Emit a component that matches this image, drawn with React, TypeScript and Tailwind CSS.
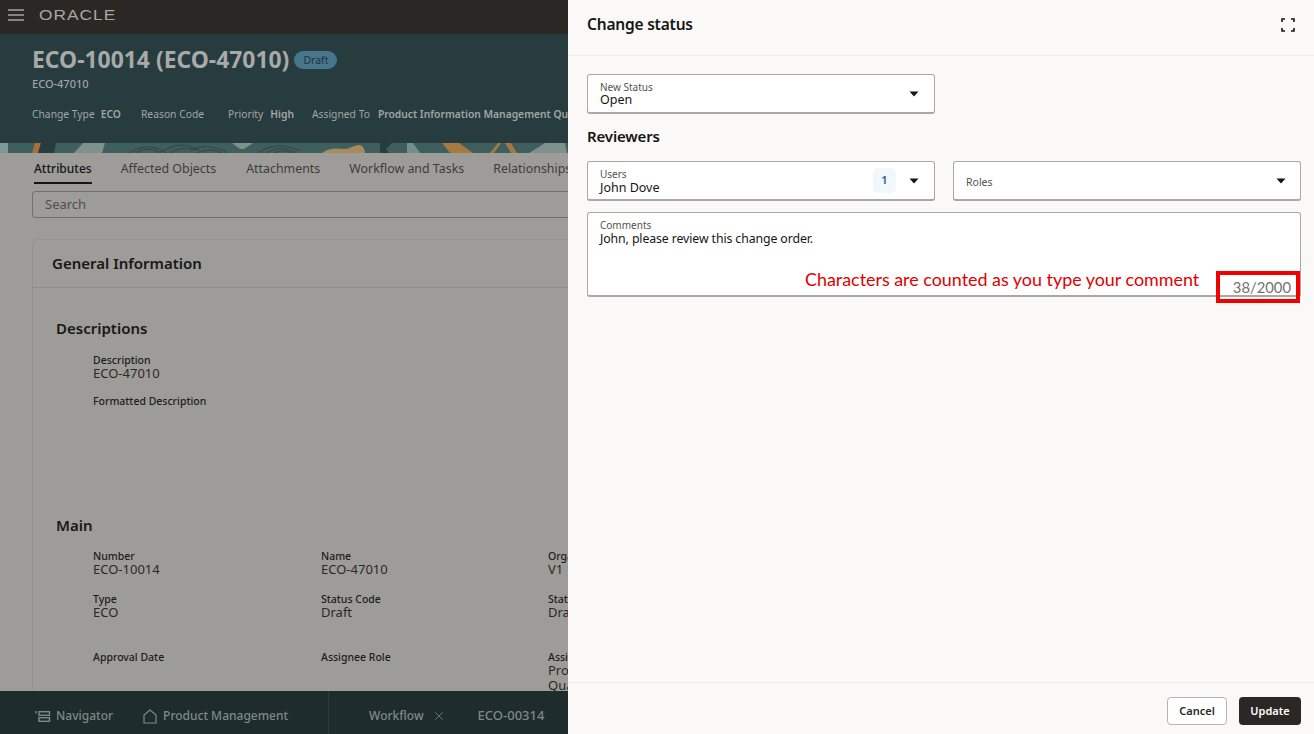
import { X } from "lucide-react";

const sans = { fontFamily: '"Noto Sans", sans-serif' };

function Caret() {
  return (
    <svg width="10" height="6" viewBox="0 0 10 6" className="shrink-0">
      <path d="M0.5 0.5h9L5 5.5z" fill="#161513" />
    </svg>
  );
}

function PatternStrip() {
  return (
    <svg width="568" height="10" viewBox="0 0 568 10" className="block shrink-0">
      <rect width="568" height="10" fill="#3e5f5e" />
      <path d="M0 0h8v10H0z" fill="#7f9796" />
      <path d="M35 0h6l-3 10h-6z" fill="#a5703a" />
      <path d="M41 0h15l-2 10H38z" fill="#263c3f" />
      <path d="M83 0h22l-3 10H74z" fill="#7d918f" />
      <g fill="none" stroke="#2c4746" strokeWidth="1">
        <path d="M130 10c12-8 24-8 36 0M136 10c8-5 16-5 24 0M160 10c12-9 26-10 38-4M170 10c10-6 20-6 30-2" />
        <path d="M190 8c10-6 24-6 38 2M198 10c8-4 16-4 24 0" />
        <path d="M258 10c12-9 28-9 42-2M266 10c10-6 20-6 30 0M274 10c6-3 12-3 18 0" />
      </g>
      <path d="M232 0h21l-9 6h-4z" fill="#7d918f" />
      <path d="M322 10c6-5 14-5 22-4 6 0 10-4 15-4 4 0 6 5 6 8z" fill="#a98a5c" />
      <path d="M380 0h12l-6 6 3 4h-9z" fill="#263c3f" />
      <path d="M407 0h6l7 10h-13z" fill="#72908e" />
      <path d="M442 0h17l14 10h-23z" fill="#a5793f" />
      <path d="M490 10l8-10h3l-7 10zM505 0h6l6 10h-6z" fill="#a5793f" />
      <path d="M545 0h20l2 10h-38z" fill="#7d918f" />
    </svg>
  );
}

function Field({ label, value }: { label: string; value?: string }) {
  return (
    <div>
      <div className="text-[10.5px] leading-[12px] font-medium text-[#1d1c1a]">{label}</div>
      {value && <div className="text-[13px] leading-[15px] text-[#2a2927]">{value}</div>}
    </div>
  );
}

function LeftPage() {
  return (
    <div className="flex h-full w-[568px] shrink-0 flex-col overflow-hidden bg-[#9d9c99]">
      <div className="flex h-[34px] shrink-0 items-center bg-[#2b2725] pb-[4px] pl-[8px]">
        <svg width="16" height="12" viewBox="0 0 16 12">
          <path d="M0 1h16M0 6h16M0 11h16" stroke="#a8a7a4" strokeWidth="1.5" />
        </svg>
        <span className="ml-[15px] origin-left scale-x-[1.24] text-[14px] leading-none tracking-[0.8px] text-[#a8a7a4]" style={{ fontFamily: '"Liberation Sans", sans-serif' }}>
          ORACLE
        </span>
      </div>

      <div className="h-[109px] shrink-0 bg-[#263c3f] pl-[32px] pt-[11px] text-[#a3a5a3]">
        <div className="flex items-center gap-[5px]">
          <h1 className="text-[22.9px] leading-[30px] font-bold whitespace-nowrap text-[#a9a9a7]">ECO-10014 (ECO-47010)</h1>
          <span className="rounded-full bg-[#47768c] px-[9px] text-[10.5px] leading-[18px] text-[#1f3440]">Draft</span>
        </div>
        <div className="mt-[1px] text-[11px] leading-[16px] font-medium">ECO-47010</div>
        <div className="mt-[14px] flex text-[10.3px] leading-[16px] whitespace-nowrap">
          <span>Change Type</span>
          <b className="ml-[6px] font-semibold">ECO</b>
          <span className="ml-[20px]">Reason Code</span>
          <span className="ml-[24px]">Priority</span>
          <b className="ml-[7px] font-semibold">High</b>
          <span className="ml-[18px]">Assigned To</span>
          <b className="ml-[8px] font-semibold">Product Information Management Quality</b>
        </div>
      </div>
      <PatternStrip />

      <div className="flex h-[31px] shrink-0 items-end gap-[29px] whitespace-nowrap pl-[34px] text-[12.4px] text-[#3d3c3a]">
        <span className="border-b-2 border-[#161513] pb-[4px] text-[12px] font-medium text-[#161513]">Attributes</span>
        <span className="mr-[1px] pb-[5px]">Affected Objects</span>
        <span className="pb-[5px]">Attachments</span>
        <span className="pb-[5px]">Workflow and Tasks</span>
        <span className="pb-[5px]">Relationships</span>
      </div>

      <div className="min-h-0 flex-1 pl-[32px]">
        <div className="mt-[7px] flex h-[27px] items-center rounded-l-[4px] border border-r-0 border-[#71706d] pl-[12px] text-[13px] text-[#4f4e4c]">
          Search
        </div>

        <div className="mt-[21px] h-[600px] rounded-tl-[6px] border border-r-0 border-[#949390]">
          <div className="flex h-[48px] items-center border-b border-[#8f8e8b] pl-[19px] text-[15px] font-semibold text-[#191816]">
            General Information
          </div>
          <div className="pl-[23px] pt-[29px]">
            <h2 className="text-[15px] leading-[22px] font-semibold text-[#191816]">Descriptions</h2>
            <div className="ml-[37px] mt-[15px]">
              <Field label="Description" value="ECO-47010" />
              <div className="mt-[14px] text-[10.5px] leading-[13px] font-medium text-[#1d1c1a]">Formatted Description</div>
            </div>
            <h2 className="mt-[106px] text-[15px] leading-[22px] font-semibold text-[#191816]">Main</h2>
            <div className="ml-[37px] mt-[14px] grid w-[600px] grid-cols-[228px_227px_145px]">
              <div className="h-[43px]"><Field label="Number" value="ECO-10014" /></div>
              <div><Field label="Name" value="ECO-47010" /></div>
              <div><Field label="Organization" value="V1" /></div>
              <div className="h-[58px]"><Field label="Type" value="ECO" /></div>
              <div><Field label="Status Code" value="Draft" /></div>
              <div><Field label="Status" value="Draft" /></div>
              <div><Field label="Approval Date" /></div>
              <div><Field label="Assignee Role" /></div>
              <div>
                <Field label="Assigned To" value="Product" />
                <div className="text-[13px] leading-[15px] text-[#2a2927]">Quality</div>
              </div>
            </div>
          </div>
        </div>
      </div>

      <div className="flex h-[43px] shrink-0 items-center whitespace-nowrap bg-[#1e2c2e] pt-[7px] text-[12px] font-medium text-[#7f8988]">
        <svg width="16" height="11" viewBox="0 0 16 11" className="ml-[35px]" fill="none" stroke="#7f8988" strokeWidth="1.4">
          <path d="M1 0v2.5" />
          <rect x="4" y="0.7" width="10.5" height="3.6" />
          <rect x="4" y="6.7" width="10.5" height="3.6" />
        </svg>
        <span className="ml-[5px]">Navigator</span>
        <svg width="14" height="15" viewBox="0 0 14 15" className="ml-[30px]" fill="none" stroke="#7f8988" strokeWidth="1.2">
          <path d="M1 14V6l6-5 6 5v8z" />
        </svg>
        <span className="ml-[6px]">Product Management</span>
        <div className="ml-[40px] mt-[-7px] h-[43px] border-l border-[#2b3a3c]" />
        <span className="ml-[40px]">Workflow</span>
        <X size={14} strokeWidth={1.3} className="ml-[8px]" />
        <span className="ml-[32px] text-[13px]">ECO-00314</span>
      </div>
    </div>
  );
}

function SelectBox({ label, value, badge }: { label: string; value: string; badge?: string }) {
  return (
    <div className="flex h-[40px] items-center rounded-[3px] border border-b-2 border-[#a9a8a5] bg-white pl-[12px] pr-[15px]">
      <div className={badge ? "min-w-0 flex-1 pt-[3px]" : "min-w-0 flex-1"}>
        <div className="text-[10px] leading-[12px] text-[#55534f]">{label}</div>
        <div className={badge ? "text-[12.5px] leading-[16px] text-[#161513]" : "text-[12.5px] leading-[14px] text-[#161513]"}>{value}</div>
      </div>
      {badge && (
        <span className="mr-[13px] flex h-[25px] w-[23px] items-center justify-center rounded-[5px] bg-[#f1f7fa] text-[11px] font-semibold text-[#2b5d80]">
          {badge}
        </span>
      )}
      <Caret />
    </div>
  );
}

function ChangeStatusPanel() {
  return (
    <div className="flex h-full w-[746px] shrink-0 flex-col bg-[#faf9f7] text-[#161513]">
      <div className="flex h-[56px] shrink-0 items-center justify-between border-b border-[#f0eeeb] pb-[6px] pl-[19px] pr-[19px]">
        <h2 className="text-[15.5px] font-semibold tracking-[-0.2px]">Change status</h2>
        <svg width="14" height="14" viewBox="0 0 14 14" fill="none" stroke="#161513" strokeWidth="1.6">
          <path d="M1 4V1h3M10 1h3v3M13 10v3h-3M4 13H1v-3" />
        </svg>
      </div>

      <div className="flex-1 pl-[19px] pr-[13px] pt-[18px]">
        <div className="grid grid-cols-2 gap-x-[18px]">
          <SelectBox label="New Status" value="Open" />
        </div>
        <h3 className="mt-[10px] text-[15px] leading-[24px] font-semibold tracking-[-0.15px]">Reviewers</h3>
        <div className="mt-[13px] grid grid-cols-2 gap-x-[18px]">
          <SelectBox label="Users" value="John Dove" badge="1" />
          <div className="flex h-[40px] items-center justify-between rounded-[3px] border border-b-2 border-[#a9a8a5] bg-white pl-[12px] pr-[14px]">
            <span className="pt-[5px] text-[10.5px] text-[#55534f]">Roles</span>
            <Caret />
          </div>
        </div>
        <div className="relative mt-[11px] h-[85px] rounded-[3px] border border-b-2 border-[#a9a8a5] bg-white pl-[12px] pt-[6px]">
          <div className="text-[10px] leading-[13px] text-[#55534f]">Comments</div>
          <div className="text-[12.3px] leading-[14px] tracking-[-0.1px]">John, please review this change order.</div>
          <span className="absolute left-[217px] top-[55px] whitespace-nowrap text-[17.9px] leading-[22px] text-[#e00000]" style={{ fontFamily: "Lato, sans-serif" }}>
            Characters are counted as you type your comment
          </span>
          <span className="absolute right-0 top-[58px] flex h-[32px] w-[84px] items-center justify-end border-[4px] border-[#f00000] pr-[5px] text-[14.8px] text-[#74736f]" style={{ fontFamily: "Lato, sans-serif" }}>
            38/2000
          </span>
        </div>
      </div>

      <div className="flex h-[52px] shrink-0 items-start justify-end gap-[12px] border-t border-[#f0eeeb] pr-[13px] pt-[14px]">
        <button className="h-[28px] w-[60px] rounded-[4px] border border-[#b5b4b1] bg-white text-[11px] font-semibold text-[#2b2725]">Cancel</button>
        <button className="h-[28px] w-[62px] rounded-[4px] bg-[#2b2725] text-[11px] font-semibold text-white">Update</button>
      </div>
    </div>
  );
}

export default function App() {
  return (
    <div className="flex h-[734px] w-[1314px] overflow-hidden" style={sans}>
      <LeftPage />
      <ChangeStatusPanel />
    </div>
  );
}
